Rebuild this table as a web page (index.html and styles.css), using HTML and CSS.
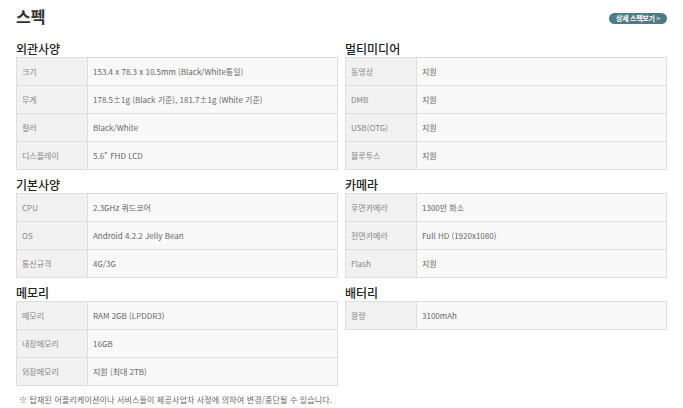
FILE: index.html
```html
<!DOCTYPE html>
<html lang="ko">
<head>
<meta charset="utf-8">
<link rel="stylesheet" href="styles.css">
</head>
<body>
<div class="page">
  <div class="top">
    <h1 class="title">스펙</h1>
    <a class="more">상세 스펙보기 <span class="chev">&gt;</span></a>
  </div>
  <div class="grid">
    <section class="sec">
      <h2 class="sec-title">외관사양</h2>
      <table class="spec">
        <tr><th>크기</th><td>153.4 x 78.3 x 10.5mm (Black/White통일)</td></tr>
        <tr><th>무게</th><td>178.5±1g (Black 기준), 181.7±1g (White 기준)</td></tr>
        <tr><th>컬러</th><td>Black/White</td></tr>
        <tr><th>디스플레이</th><td>5.6" FHD LCD</td></tr>
      </table>
    </section>
    <section class="sec">
      <h2 class="sec-title">멀티미디어</h2>
      <table class="spec">
        <tr><th>동영상</th><td>지원</td></tr>
        <tr><th>DMB</th><td>지원</td></tr>
        <tr><th>USB(OTG)</th><td>지원</td></tr>
        <tr><th>블루투스</th><td>지원</td></tr>
      </table>
    </section>
    <section class="sec">
      <h2 class="sec-title">기본사양</h2>
      <table class="spec">
        <tr><th>CPU</th><td>2.3GHz 쿼드코어</td></tr>
        <tr><th>OS</th><td>Android 4.2.2 Jelly Bean</td></tr>
        <tr><th>통신규격</th><td>4G/3G</td></tr>
      </table>
    </section>
    <section class="sec">
      <h2 class="sec-title">카메라</h2>
      <table class="spec">
        <tr><th>후면카메라</th><td>1300만 화소</td></tr>
        <tr><th>전면카메라</th><td>Full HD (1920x1080)</td></tr>
        <tr><th>Flash</th><td>지원</td></tr>
      </table>
    </section>
    <section class="sec">
      <h2 class="sec-title">메모리</h2>
      <table class="spec">
        <tr><th>메모리</th><td>RAM 2GB (LPDDR3)</td></tr>
        <tr><th>내장메모리</th><td>16GB</td></tr>
        <tr><th>외장메모리</th><td>지원 (최대 2TB)</td></tr>
      </table>
    </section>
    <section class="sec">
      <h2 class="sec-title">배터리</h2>
      <table class="spec">
        <tr><th>용량</th><td>3100mAh</td></tr>
      </table>
    </section>
  </div>
  <p class="note">※ 탑재된 어플리케이션이나 서비스들이 제공사업자 사정에 의하여 변경/중단될 수 있습니다.</p>
</div>
</body>
</html>
```
FILE: styles.css
```css
html, body {
  margin: 0;
  padding: 0;
  background: #fff;
}
body {
  font-family: "Noto Sans CJK KR", "Noto Sans", sans-serif;
  color: #666;
}
.page {
  width: 651px;
  padding: 4px 16px 0 16px;
}
.top {
  display: flex;
  justify-content: space-between;
  align-items: flex-start;
  height: 37px;
}
.title {
  margin: 0;
  font-size: 16px;
  line-height: 24px;
  font-weight: 700;
  color: #333;
}
.more {
  margin-top: 9px;
  display: block;
  width: 58px;
  height: 11px;
  border-radius: 6px;
  background: #4e7c86;
  color: #fff;
  font-size: 7px;
  line-height: 11px;
  font-weight: 700;
  text-align: center;
  letter-spacing: -0.3px;
}
.chev {
  font-weight: 400;
}
.grid {
  display: grid;
  grid-template-columns: 322px 322px;
  column-gap: 7px;
  row-gap: 7px;
}
.sec-title {
  margin: 0;
  height: 16px;
  font-size: 12px;
  line-height: 16px;
  font-weight: 500;
  color: #222;
}
.spec {
  width: 100%;
  border-collapse: collapse;
  font-size: 8px;
}
.spec th, .spec td {
  height: 27px;
  padding: 0 5px;
  border: 1px solid #dedede;
  text-align: left;
  vertical-align: middle;
  font-weight: 400;
}
.spec th {
  width: 60px;
  background: #f1f1f1;
  color: #888;
}
.spec td {
  background: #f9f9f9;
  color: #666;
}
.note {
  margin: 8px 0 0 3px;
  font-size: 8px;
  letter-spacing: 0.15px;
  color: #666;
}
```
